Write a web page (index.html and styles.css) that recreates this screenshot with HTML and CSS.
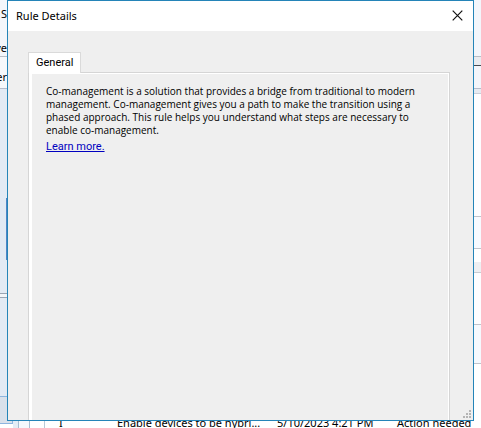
FILE: index.html
```html
<!DOCTYPE html>
<html lang="en">
<head>
<meta charset="utf-8">
<title>Rule Details</title>
<link rel="stylesheet" href="styles.css">
</head>
<body>
<div class="console">
  <div class="workspace">
    <div class="rail rail-left">
      <div class="ribbon"><span>S</span><span>ve</span></div>
      <div class="crumb"><span>er</span></div>
      <div class="nav"></div>
      <div class="nav-active"></div>
      <div class="nav nav-gap"></div>
      <div class="splitter"></div>
      <div class="nav nav-fill"></div>
    </div>
    <div class="rail rail-right">
      <div class="ribbon"></div>
      <div class="gap-bar"></div>
      <div class="crumb"></div>
      <div class="divider"></div>
      <div class="pane pane-tall"></div>
      <div class="pane pane-short"></div>
      <div class="pane-head"></div>
      <div class="pane pane-mid"></div>
      <div class="pane pane-low"></div>
    </div>
  </div>
  <div class="bottom">
    <div class="nav-button"></div>
    <div class="gutter"></div>
    <table class="rules">
      <tr><td class="mark">I</td><td class="name">Enable devices to be hybri...</td><td class="date">5/10/2023 4:21 PM</td><td>Action needed</td></tr>
    </table>
  </div>
</div>

<section class="dialog" role="dialog" aria-labelledby="dialog-title">
  <header class="titlebar">
    <h1 id="dialog-title">Rule Details</h1>
    <button class="close" type="button" aria-label="Close">
      <svg width="11" height="11" viewBox="0 0 11 11"><path d="M.7.7l9.6 9.6M10.3.7L.7 10.3" stroke="#111" stroke-width="1.2" fill="none"/></svg>
    </button>
  </header>
  <div class="content">
    <div class="tabs" role="tablist"><button class="tab" type="button" role="tab" aria-selected="true">General</button></div>
    <div class="panel" role="tabpanel">
      <p>Co-management is a solution that provides a bridge from traditional to modern management. Co-management gives you a path to make the transition using a phased approach. This rule helps you understand what steps are necessary to enable co-management.</p>
      <a href="#">Learn more.</a>
    </div>
  </div>
  <svg class="grip" width="8" height="8" viewBox="0 0 8 8" fill="#b4b4b4"><path d="M6 0h2v2h-2zM3 3h2v2h-2zM6 3h2v2h-2zM0 6h2v2h-2zM3 6h2v2h-2zM6 6h2v2h-2z"/></svg>
</section>
</body>
</html>
```
FILE: styles.css
```css
* {
  box-sizing: border-box;
}

body {
  margin: 0;
  overflow: hidden;
  font-family: Roboto, "Liberation Sans", sans-serif;
  font-size: 11px;
  color: #000;
}

.console {
  display: flex;
  flex-direction: column;
  height: 100vh;
  overflow: hidden;
  background: #fff;
  font-family: "Noto Sans", "Open Sans", sans-serif;
}

.workspace {
  display: flex;
  flex: 1;
  min-height: 0;
  justify-content: space-between;
}

.rail {
  display: flex;
  flex-direction: column;
  width: 7px;
  overflow: hidden;
}

.rail > * {
  flex: none;
}

.ribbon,
.rail-left .crumb {
  display: flex;
  flex-direction: column;
  align-items: flex-end;
  line-height: 16px;
}

.ribbon {
  gap: 18px;
  height: 57px;
  padding-top: 6px;
  border-bottom: 1px solid #b9bec6;
  background: #f3f6fb;
}

.rail-left .crumb {
  height: 32px;
  padding-top: 12px;
  border-bottom: 1px solid #b5bccb;
  background: #f6f8fb;
}

.nav {
  height: 109px;
  background: #e2eaf4;
}

.nav-active {
  height: 62px;
  border-right: 1px solid #4f86c6;
  background: #e2eaf4;
}

.nav-gap {
  height: 33px;
}

.splitter {
  height: 5px;
  border: solid #9aa4b2;
  border-width: 1px 0;
  background: #f2f5f9;
}

.rail > .nav-fill {
  flex: 1;
}

.gap-bar {
  height: 9px;
  border-bottom: 1px solid #454a52;
  background: #e9ebef;
}

.rail-right .crumb {
  height: 23px;
  border-bottom: 1px solid #b5bccb;
  background: #f3f5fa;
}

.divider {
  height: 5px;
  border-bottom: 1px solid #c9ced8;
  background: #e6eaf1;
}

.pane {
  border-bottom: 1px solid #c0c4cc;
  background: #fdfdff;
}

.pane-tall {
  height: 123px;
}

.pane-short {
  height: 32px;
  background: #f7faff;
}

.pane-head {
  height: 11px;
  margin-top: 13px;
  border-bottom: 1px solid #c8ccd2;
  background: #eeeff2;
}

.pane-mid {
  height: 52px;
}

.pane-low {
  height: 39px;
  background: #f5f9fe;
}

.bottom {
  display: flex;
  height: 32px;
}

.nav-button {
  width: 13px;
  height: 28px;
  border: 1px solid #8db5df;
  border-left: 0;
  background: #d9e1eb;
}

.gutter {
  width: 32px;
  border-right: 1px solid #b8cad8;
  background: linear-gradient(90deg, #e4edf6 5px, #a9bed1 5px 6px, #f5f9fd 6px 16px, #a9bed1 16px 17px, #fff 17px);
}

.rules {
  flex: 1;
  height: 32px;
  border-collapse: collapse;
  table-layout: fixed;
  line-height: 14px;
  white-space: nowrap;
}

.rules td {
  padding: 20px 0 0;
  vertical-align: top;
}

.rules .mark {
  width: 72px;
  padding-left: 14px;
}

.rules .name {
  width: 160px;
}

.rules .date {
  width: 120px;
}

.dialog {
  position: absolute;
  inset: 0 7px 7px;
  display: flex;
  flex-direction: column;
  overflow: hidden;
  border: 1px solid #2484b8;
  background: #efefef;
}

.titlebar {
  display: flex;
  align-items: center;
  justify-content: space-between;
  height: 30px;
  padding: 0 10px 0 8px;
  background: #fff;
  flex: none;
}

h1 {
  margin: 0;
  font: 400 11px/16px "Noto Sans", "Open Sans", sans-serif;
}

.close {
  display: flex;
  padding: 0 0 2px;
  border: 0;
  background: none;
}

.content {
  display: flex;
  flex: 1;
  flex-direction: column;
  padding: 21px 23px 0 20px;
}

.tabs {
  display: flex;
}

.tab {
  position: relative;
  height: 21px;
  margin-bottom: -1px;
  padding: 0 7px;
  border: 1px solid #dadada;
  border-bottom: 0;
  background: #fff;
  font: inherit;
  line-height: 18px;
  color: inherit;
}

.panel {
  flex: 1;
  padding: 12px 24px 0 17px;
  border: 1px solid #d5d5d5;
  border-bottom: 0;
  box-shadow: inset 3px 0 #fff, inset -1px 1px #fff;
  line-height: 13px;
}

.panel p {
  margin: 0 0 3px;
  font-family: "Open Sans", "Liberation Sans", sans-serif;
  font-size: 10px;
}

.panel a {
  color: #0000c0;
}

.grip {
  position: absolute;
  right: 2px;
  bottom: 2px;
}
```
